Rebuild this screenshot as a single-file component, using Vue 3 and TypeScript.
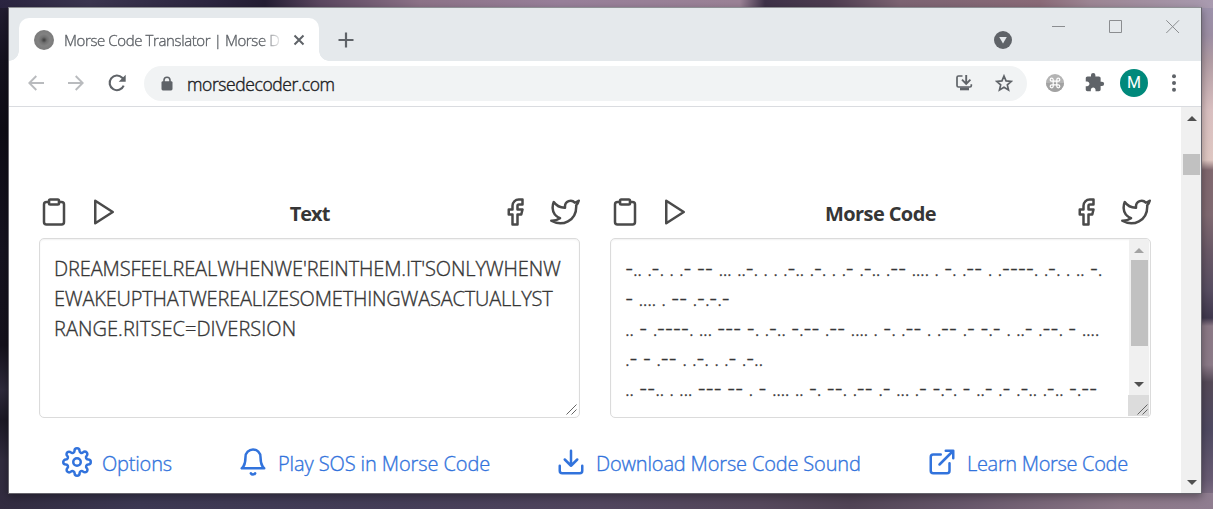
<script setup lang="ts">
interface Run { text: string; kind: string }

const plainLines: { text: string; cls: string }[] = [
  { text: "DREAMSFEELREALWHENWE'REINTHEM.IT'SONLYWHENW", cls: 'l1' },
  { text: 'EWAKEUPTHATWEREALIZESOMETHINGWASACTUALLYST', cls: 'l2' },
  { text: 'RANGE.RITSEC=DIVERSION', cls: 'l3' },
]

const morseLines: string[] = [
  '-.. .-. . .- -- ... ..-. . . .-.. .-. . .- .-.. .-- .... . -. .-- . .----. .-. . .. -.',
  '- .... . -- .-.-.-',
  '.. - .----. ... --- -. .-.. -.-- .-- .... . -. .-- . .-- .- -.- . ..- .--. - ....',
  '.- - .-- . .-. . .- .-..',
  '.. --.. . ... --- -- . - .... .. -. --. .-- .- ... .- -.-. - ..- .- .-.. .-.. -.--',
]

const kinds: Record<string, string> = { '-': 'dash', '.': 'dot', ' ': 'gap' }

function runs(line: string): Run[] {
  return (line.match(/-+|\.+| +/g) ?? []).map((text) => ({ text, kind: kinds[text[0]] }))
}

const panels = [
  { title: 'Text', id: 'plain' },
  { title: 'Morse Code', id: 'morse' },
]
</script>

<template>
  <div class="desktop">
    <div class="window">
      <header class="tabstrip">
        <div class="tab">
          <i class="favicon"></i>
          <div class="tab-title"><span>Morse Code Translator | Morse D</span></div>
          <svg class="tab-close" width="12" height="12" viewBox="0 0 12 12"><path d="M1.5 1.5l9 9M10.5 1.5l-9 9" stroke="#5f6368" stroke-width="2" /></svg>
        </div>
        <svg class="plus" width="16" height="16" viewBox="0 0 16 16"><path d="M8 .5v15M.5 8h15" stroke="#5f6368" stroke-width="2.2" /></svg>
        <div class="spacer"></div>
        <svg class="search-tabs" width="18" height="18" viewBox="0 0 18 18"><circle cx="9" cy="9" r="9" fill="#5f6368" /><path d="M5.2 6h7.600L9 12.500z" fill="#e5e9ec" /></svg>
        <div class="controls">
          <svg width="14" height="14" viewBox="0 0 14 14"><path d="M0 6.5h13" /></svg>
          <svg width="14" height="14" viewBox="0 0 14 14"><path d="M.5.5h12v12H.5z" /></svg>
          <svg width="14" height="14" viewBox="0 0 14 14"><path d="M.3.3l12.7 12.7M13 .3L.3 13" /></svg>
        </div>
      </header>

      <div class="toolbar">
        <svg class="nav back" width="16" height="16" viewBox="0 0 16 16"><path d="M16 8H1.5M8.3 1L1.3 8l7 7" /></svg>
        <svg class="nav fwd" width="16" height="16" viewBox="0 0 16 16"><path d="M0 8h14.500M7.700 1l7 7-7 7" /></svg>
        <svg class="reload" width="18" height="18" viewBox="0 0 18 18"><path d="M15.700 11.600A7.300 7.300 0 1 1 14.200 3.800L16 5.600" fill="none" stroke="#5f6368" stroke-width="2.100" /><path d="M17.700.8v7h-7z" fill="#5f6368" /></svg>
        <div class="omnibox">
          <svg class="lock" width="12" height="15" viewBox="0 0 12 15"><path d="M3 6V4.200a3 3 0 0 1 6 0V6" fill="none" stroke="#5f6368" stroke-width="1.600" /><rect x=".5" y="5.200" width="11" height="9.300" rx="1.400" fill="#5f6368" /></svg>
          <span class="url">morsedecoder.com</span>
          <div class="spacer"></div>
          <svg class="install" width="17" height="17" viewBox="0 0 17 17"><path d="M6.500 1H2.500Q1 1 1 2.500V10.500Q1 12 2.500 12H14Q15.300 12 15.300 10.800V9.300" fill="none" stroke="#5f6368" stroke-width="1.700" /><path d="M10.200 0v8M6 4.700l4.200 4.200 4.200-4.200" fill="none" stroke="#5f6368" stroke-width="1.900" /><path d="M4 12.500h9v2.800H4z" fill="#5f6368" /></svg>
          <svg class="star" width="18" height="18" viewBox="0 0 18 18"><path d="M9 2l2.050 4.900 5.300.45-4.020 3.500 1.200 5.150L9 13.250 4.470 16l1.200-5.150L1.650 7.350l5.300-.45z" fill="none" stroke="#5f6368" stroke-width="1.700" /></svg>
        </div>
        <svg class="ext" width="18" height="18" viewBox="0 0 18 18"><circle cx="9" cy="9" r="9" fill="#b4b4b4" /><path d="M0 9a9 9 0 0 0 18 0z" fill="#a2a2a2" /><path d="M7.200 7.200h3.600v3.600H7.200zM7.200 7.200H5.700a1.500 1.500 0 1 1 1.500-1.500zM10.800 7.200V5.700a1.500 1.500 0 1 1 1.500 1.500zM10.800 10.800h1.500a1.500 1.500 0 1 1-1.500 1.500zM7.200 10.800v1.500a1.500 1.500 0 1 1-1.500-1.500z" fill="none" stroke="#fff" stroke-width="1.200" /></svg>
        <svg class="puzzle" width="21" height="21" viewBox="0 0 24 24"><path fill="#5f6368" d="M20.500 11H19V7c0-1.100-.9-2-2-2h-4V3.500a2.500 2.500 0 0 0-5 0V5H4c-1.100 0-1.990.9-1.990 2v3.800H3.500c1.490 0 2.700 1.210 2.700 2.700s-1.210 2.700-2.700 2.700H2V20c0 1.100.9 2 2 2h3.800v-1.500c0-1.490 1.210-2.700 2.700-2.700s2.700 1.210 2.700 2.700V22H17c1.100 0 2-.9 2-2v-4h1.500a2.500 2.500 0 0 0 0-5z" /></svg>
        <div class="avatar">M</div>
        <svg class="menu" width="4" height="18" viewBox="0 0 4 18"><g fill="#5f6368"><circle cx="2" cy="2.200" r="2" /><circle cx="2" cy="9" r="2" /><circle cx="2" cy="15.800" r="2" /></g></svg>
      </div>

      <div class="viewport">
        <main class="page">
          <div class="panels">
            <section v-for="p in panels" :key="p.id" class="panel">
              <div class="panel-head">
                <svg class="icon" viewBox="0 0 24 24"><path d="M16 4h2a2 2 0 0 1 2 2v14a2 2 0 0 1-2 2H6a2 2 0 0 1-2-2V6a2 2 0 0 1 2-2h2" /><rect x="8" y="2" width="8" height="4" rx="1" /></svg>
                <svg class="icon" viewBox="0 0 24 24"><path d="M5 3l14 9-14 9z" /></svg>
                <h2><span :class="['heading', p.id]">{{ p.title }}</span></h2>
                <svg class="icon" viewBox="0 0 24 24"><path d="M18 2h-3a5 5 0 0 0-5 5v3H7v4h3v8h4v-8h3l1-4h-4V7a1 1 0 0 1 1-1h3z" /></svg>
                <svg class="icon" viewBox="0 0 24 24"><path d="M23 3a10.900 10.900 0 0 1-3.140 1.530 4.480 4.480 0 0 0-7.860 3v1A10.660 10.660 0 0 1 3 4s-4 9 5 13a11.640 11.640 0 0 1-7 2c9 5 20 0 20-11.500a4.500 4.500 0 0 0-.08-.83A7.720 7.720 0 0 0 23 3z" /></svg>
              </div>
              <div v-if="p.id === 'plain'" class="area">
                <div class="lines">
                  <div v-for="l in plainLines" :key="l.cls" class="line"><span :class="l.cls">{{ l.text }}</span></div>
                </div>
                <svg class="grip" width="11" height="11" viewBox="0 0 11 11"><path d="M.5 10.500l10-10M5.500 10.500l5-5" /></svg>
              </div>
              <div v-else class="area scrolling">
                <div class="lines">
                  <div v-for="(l, i) in morseLines" :key="i" class="line"><span v-for="(r, j) in runs(l)" :key="j" :class="r.kind">{{ r.text }}</span></div>
                </div>
                <div class="side">
                  <div class="bar inner">
                    <i class="up dim"></i>
                    <i class="thumb"></i>
                    <i class="down"></i>
                  </div>
                  <div class="corner"><svg class="grip" width="11" height="11" viewBox="0 0 11 11"><path d="M.5 10.500l10-10M5.500 10.500l5-5" /></svg></div>
                </div>
              </div>
            </section>
          </div>

          <nav class="links">
            <a class="link a1">
              <svg class="icon" viewBox="0 0 24 24"><circle cx="12" cy="12" r="3" /><path d="M19.400 15a1.650 1.650 0 0 0 .33 1.820l.06.06a2 2 0 0 1 0 2.830 2 2 0 0 1-2.830 0l-.06-.06a1.650 1.650 0 0 0-1.820-.33 1.650 1.650 0 0 0-1 1.510V21a2 2 0 0 1-2 2 2 2 0 0 1-2-2v-.09A1.650 1.650 0 0 0 9 19.400a1.650 1.650 0 0 0-1.820.33l-.06.06a2 2 0 0 1-2.830 0 2 2 0 0 1 0-2.830l.06-.06a1.650 1.650 0 0 0 .33-1.820 1.650 1.650 0 0 0-1.510-1H3a2 2 0 0 1-2-2 2 2 0 0 1 2-2h.09A1.650 1.650 0 0 0 4.600 9a1.650 1.650 0 0 0-.33-1.820l-.06-.06a2 2 0 0 1 0-2.830 2 2 0 0 1 2.830 0l.06.06a1.650 1.650 0 0 0 1.820.33H9a1.650 1.650 0 0 0 1-1.510V3a2 2 0 0 1 2-2 2 2 0 0 1 2 2v.09a1.650 1.650 0 0 0 1 1.510 1.650 1.650 0 0 0 1.820-.33l.06-.06a2 2 0 0 1 2.830 0 2 2 0 0 1 0 2.830l-.06.06a1.650 1.650 0 0 0-.33 1.820V9a1.650 1.650 0 0 0 1.510 1H21a2 2 0 0 1 2 2 2 2 0 0 1-2 2h-.09a1.650 1.650 0 0 0-1.510 1z" /></svg>
              <span>Options</span>
            </a>
            <a class="link a2">
              <svg class="icon" viewBox="0 0 24 24"><path d="M18 8A6 6 0 0 0 6 8c0 7-3 9-3 9h18s-3-2-3-9M13.730 21a2 2 0 0 1-3.460 0" /></svg>
              <span>Play SOS in Morse Code</span>
            </a>
            <a class="link a3">
              <svg class="icon" viewBox="0 0 24 24"><path d="M21 15v4a2 2 0 0 1-2 2H5a2 2 0 0 1-2-2v-4M7 10l5 5 5-5M12 15V3" /></svg>
              <span>Download Morse Code Sound</span>
            </a>
            <a class="link a4">
              <svg class="icon" viewBox="0 0 24 24"><path d="M18 13v6a2 2 0 0 1-2 2H5a2 2 0 0 1-2-2V8a2 2 0 0 1 2-2h6M15 3h6v6M10 14L21 3" /></svg>
              <span>Learn Morse Code</span>
            </a>
          </nav>
        </main>
        <div class="bar outer">
          <i class="up"></i>
          <i class="thumb"></i>
          <i class="down"></i>
        </div>
      </div>
    </div>
  </div>
</template>

<style>
html, body { margin: 0; overflow: hidden; }
</style>

<style scoped>
* { box-sizing: border-box; }
svg, i { display: block; flex: none; }
.desktop {
  width: 1213px;
  height: 509px;
  padding: 7px 0 0 8px;
  font-family: "Open Sans", "Noto Sans", sans-serif;
  font-weight: 300;
  background:
    linear-gradient(to right, #2a2440 0, #3c3650 90px, #2c2640 210px, #241e34 265px, #5b4760 320px, #8d7388 420px, #98809a 560px, #9b8296 740px, #3e3248 765px, #4d3c50 830px, #7d6473 900px, #8a6b78 1040px, #9d8694 1090px, #a99bb0 1213px) 0 0 / 100% 8px no-repeat,
    linear-gradient(to right, #322c40 0, #3c3852 140px, #453e58 400px, #51465e 600px, #55485c 760px, #504455 850px, #66566a 960px, #8b7787 1120px, #8f7d90 1213px) 0 100% / 100% 16px no-repeat,
    linear-gradient(#9c92ac 0, #9c8ea4 35px, #b09ba3 60px, #d9bfc0 110px, #dfc7c2 160px, #80686f 170px, #806a72 215px, #6b5a68 250px, #584e62 290px, #40384e 318px, #8b7986 326px, #8b7a88 365px, #554a58 382px, #4f4a62 430px, #695c74 480px, #8f7d90 509px) 100% 0 / 13px 100% no-repeat,
    linear-gradient(#241f33 0, #15121f 60px, #0e0c16 130px, #161320 250px, #14111c 345px, #2e2a3b 390px, #1c1925 420px, #312c3e 460px, #322c40 509px) 0 0 / 10px 100% no-repeat,
    #3a3450;
}
.window {
  width: 1194px;
  height: 487px;
  border: 1px solid #66646c;
  border-top-color: #8e9094;
  background: #fff;
  box-shadow: 0 3px 8px rgba(0, 0, 0, .35);
}
.spacer { flex: 1; }

.tabstrip { display: flex; height: 53px; background: #e5e9ec; padding-left: 10px; }
.tab {
  position: relative;
  display: flex;
  align-items: center;
  width: 300px;
  height: 43px;
  margin-top: 10px;
  padding-left: 15px;
  border-radius: 10px 10px 0 0;
  background: #fff;
}
.tab::before, .tab::after {
  content: "";
  position: absolute;
  bottom: 0;
  width: 10px;
  height: 10px;
}
.tab::before { left: -10px; background: radial-gradient(circle at 0 0, transparent 9.5px, #fff 10px); }
.tab::after { right: -10px; background: radial-gradient(circle at 100% 0, transparent 9.5px, #fff 10px); }
.favicon { width: 20px; height: 20px; border-radius: 50%; background: radial-gradient(circle, #3c3c3c 0, #707070 3px, #828282 6px, #7b7b7b 10px); }
.tab-title {
  width: 219px;
  margin-left: 10px;
  overflow: hidden;
  white-space: nowrap;
  font-size: 15px;
  letter-spacing: -.39px;
  -webkit-text-stroke: .35px;
  line-height: 22px;
  color: #5f6368;
  -webkit-mask-image: linear-gradient(to right, #000 198px, transparent 219px);
  mask-image: linear-gradient(to right, #000 198px, transparent 219px);
}
.tab-close { margin-left: 10px; }
.plus { margin: 24px 0 0 19px; }
.search-tabs { margin: 23px 40px 0 0; }
.controls { display: flex; gap: 43px; margin: 12px 21px 0 0; fill: none; stroke: #8b8d90; stroke-width: 1; }

.toolbar { display: flex; align-items: center; height: 46px; padding-bottom: 1px; border-bottom: 1px solid #dadce0; }
.nav { fill: none; stroke: #b9bbbe; stroke-width: 1.9; }
.back { margin-left: 19px; }
.fwd { margin-left: 24px; }
.reload { margin: 0 .5px 0 23.5px; }
.omnibox { display: flex; align-items: center; width: 883px; height: 35px; margin-left: 18px; border-radius: 18px; background: #f1f3f4; }
.lock { margin-left: 17px; }
.url { margin-left: 14px; font-size: 17.5px; letter-spacing: -.4px; line-height: 24px; color: #202124; white-space: nowrap; margin-top: 1px; -webkit-text-stroke: .4px; }
.install { margin-right: 22px; }
.star { margin-right: 14px; }
.ext { margin-left: 18.5px; }
.puzzle { margin: -1px 0 0 20.5px; }
.avatar { width: 28px; height: 28px; margin-left: 15px; border-radius: 50%; background: #00897b; color: #fff; font: 16px/28px Roboto, sans-serif; text-align: center; }
.menu { margin-left: 24px; }

.viewport { display: flex; height: 386px; }
.page { width: 1172px; padding: 90px 30px 0; color: #363636; font-size: 20px; }
.panels { display: flex; gap: 30px; }
.panel { width: 541px; }
.panel-head { display: flex; gap: 20px; height: 30px; }
.icon { width: 30px; height: 30px; fill: none; stroke: #4a4a4a; stroke-width: 2; stroke-linecap: round; stroke-linejoin: round; }
h2 { flex: 1; margin: 2px 0 0; font-size: 20px; line-height: 30px; font-weight: 700; text-align: center; white-space: nowrap; }
.heading { letter-spacing: -.6px; }
.heading.plain { letter-spacing: -1px; }
.area { display: flex; position: relative; height: 180px; margin-top: 11px; border: 1px solid #dbdbdb; border-radius: 5px; box-shadow: inset 0 1px 2px rgba(10, 10, 10, .06); overflow: hidden; }
.lines { flex: 1; padding: 15px 0 0 14px; -webkit-text-stroke: .35px; }
.line { height: 30px; line-height: 30px; white-space: pre; }
.grip { position: absolute; right: 2px; bottom: 2px; fill: none; stroke: #555; stroke-width: .9; }
.l1 { letter-spacing: -.12px; }
.l2 { letter-spacing: -.19px; }
.l3 { letter-spacing: .05px; }
.dash { font-size: 23px; line-height: 0; letter-spacing: .59px; padding-left: .4px; margin-right: -.4px; }
.dot { letter-spacing: -.46px; }
.gap { letter-spacing: .31px; }

.bar { display: flex; flex-direction: column; align-items: center; width: 20px; background: #f0f0f0; }
.up, .down { width: 0; height: 0; border: 5px solid transparent; border-top-width: 0; border-bottom: 5px solid #505050; }
.down { border-top: 5px solid #505050; border-bottom-width: 0; margin-top: auto; }
.dim { border-bottom-color: #a3a3a3; }
.thumb { width: 17px; background: #c1c1c1; }
.outer { padding: 9px 0 8px 1px; }
.outer .thumb { height: 21px; margin-top: 33px; }
.side { width: 21px; margin-right: 1px; }
.inner { height: 156px; margin-left: 1px; padding: 9px 1px 8px 0; }
.inner .thumb { height: 86px; margin: 7px 0 0 1px; }
.corner { position: relative; width: 21px; height: 21px; background: #dcdcdc; }
.corner .grip { right: 1px; bottom: 1px; }

.links { display: flex; gap: 66px; margin-top: 29px; padding-left: 23px; color: #3273dc; -webkit-text-stroke: .35px; }
.link { display: flex; gap: 10px; height: 30px; white-space: nowrap; }
.link .icon { stroke: #3273dc; }
.link span { line-height: 30px; margin-top: 2px; }
.a1 { width: 110px; letter-spacing: -.2px; }
.a2 { width: 252px; letter-spacing: -.1px; }
.a3 { width: 305px; letter-spacing: -.16px; }
.a4 { width: 201px; letter-spacing: -.32px; }
</style>
